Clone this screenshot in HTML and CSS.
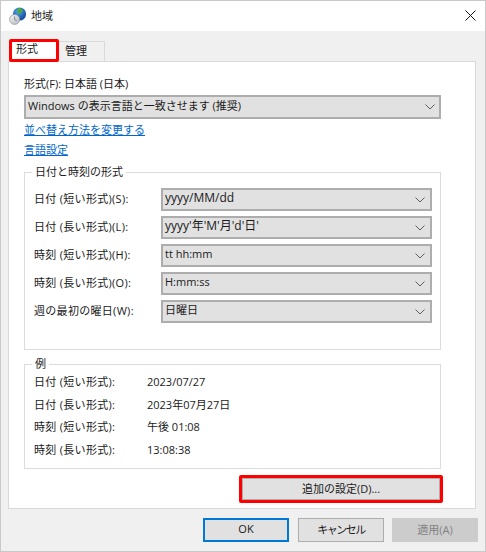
FILE: index.html
```html
<!DOCTYPE html>
<html lang="ja">
<head>
<meta charset="utf-8">
<title>地域</title>
<link rel="stylesheet" href="styles.css">
</head>
<body>
<div class="window">
  <header class="titlebar">
    <svg class="app-icon" width="18" height="18" viewBox="0 0 18 18">
      <defs>
        <radialGradient id="sea" cx="40%" cy="30%" r="80%"><stop offset="0" stop-color="#4fa6ea"/><stop offset="1" stop-color="#0b3a90"/></radialGradient>
        <linearGradient id="clock" x1="0" y1="0" x2="1" y2="1"><stop offset="0" stop-color="#f6f6f6"/><stop offset="1" stop-color="#b4babf"/></linearGradient>
      </defs>
      <circle cx="10.500" cy="7" r="6.600" fill="url(#sea)"/>
      <path d="M8.500 1.800 11 1l2 1 .8 2-1.800 1.400-1 1.800-1.600-.6-1-2.200Z" fill="#4fa83a"/>
      <circle cx="5.600" cy="12.400" r="5" fill="url(#clock)" stroke="#8b9196" stroke-width=".7"/>
      <path d="M5.600 9.400v3.200l2 1" fill="none" stroke="#6d7276" stroke-width=".8"/>
    </svg>
    <span class="title">地域</span>
    <svg class="close" width="11" height="11" viewBox="0 0 11 11"><path d="M.5.5l10 10M10.500.5l-10 10" stroke="#111" fill="none"/></svg>
  </header>
  <div class="body">
    <nav class="tabs">
      <div class="tab tab-active">形式</div>
      <div class="tab">管理</div>
    </nav>
    <main class="panel">
      <div class="format-label">形式(F): 日本語 (日本)</div>
      <div class="select select-main"><span>Windows の表示言語と一致させます (推奨)</span><svg class="chev" width="10" height="6" viewBox="0 0 10 6"><path d="M.5.5 5 5 9.500.5" /></svg></div>
      <a class="link link-first">並べ替え方法を変更する</a>
      <a class="link">言語設定</a>
      <fieldset class="group group-formats">
        <legend>日付と時刻の形式</legend>
        <div class="format-grid">
          <label>日付 (短い形式)(S):</label>
          <div class="select select-wide"><span>yyyy/MM/dd</span><svg class="chev" width="10" height="6" viewBox="0 0 10 6"><path d="M.5.5 5 5 9.500.5" /></svg></div>
          <label>日付 (長い形式)(L):</label>
          <div class="select select-wide"><span>yyyy'年'M'月'd'日'</span><svg class="chev" width="10" height="6" viewBox="0 0 10 6"><path d="M.5.5 5 5 9.500.5" /></svg></div>
          <label>時刻 (短い形式)(H):</label>
          <div class="select"><span>tt hh:mm</span><svg class="chev" width="10" height="6" viewBox="0 0 10 6"><path d="M.5.5 5 5 9.500.5" /></svg></div>
          <label>時刻 (長い形式)(O):</label>
          <div class="select"><span>H:mm:ss</span><svg class="chev" width="10" height="6" viewBox="0 0 10 6"><path d="M.5.5 5 5 9.500.5" /></svg></div>
          <label>週の最初の曜日(W):</label>
          <div class="select"><span>日曜日</span><svg class="chev" width="10" height="6" viewBox="0 0 10 6"><path d="M.5.5 5 5 9.500.5" /></svg></div>
        </div>
      </fieldset>
      <fieldset class="group group-examples">
        <legend>例</legend>
        <dl class="example-grid">
          <dt>日付 (短い形式):</dt><dd>2023/07/27</dd>
          <dt>日付 (長い形式):</dt><dd>2023年07月27日</dd>
          <dt>時刻 (短い形式):</dt><dd>午後 01:08</dd>
          <dt>時刻 (長い形式):</dt><dd>13:08:38</dd>
        </dl>
      </fieldset>
      <div class="more-row">
        <div class="highlight"><button class="btn btn-more">追加の設定(D)...</button></div>
      </div>
    </main>
    <footer class="footer">
      <button class="btn btn-ok">OK</button>
      <button class="btn btn-cancel">キャンセル</button>
      <button class="btn btn-apply">適用(A)</button>
    </footer>
  </div>
</div>
</body>
</html>
```

FILE: styles.css
```css
* { box-sizing: border-box; }
html, body { margin: 0; padding: 0; }
body {
  font-family: "Open Sans", "Noto Sans CJK JP", sans-serif;
  font-size: 11px;
  color: #1a1a1a;
  background: #fff;
}
.window {
  width: 486px;
  height: 552px;
  border: 1px solid #c9c9c9;
  display: flex;
  flex-direction: column;
  overflow: hidden;
}
.titlebar {
  height: 30px;
  flex: none;
  background: #fff;
  display: flex;
  align-items: center;
  padding: 0 9px 0 8px;
}
.app-icon { flex: none; margin-right: 4px; }
.title { flex: 1; padding-bottom: 2px; }
.close { flex: none; margin-top: -1px; }
.body {
  flex: 1;
  background: #f0f0f0;
  padding: 8px 7px 0 7px;
  display: flex;
  flex-direction: column;
}
.tabs {
  display: flex;
  height: 23px;
  margin-bottom: -1px;
  position: relative;
  z-index: 1;
  margin-right: 2px;
  flex: none;
}
.tab {
  width: 46px;
  height: 21px;
  margin-top: 2px;
  border: 1px solid #d9d9d9;
  border-left: 0;
  background: #f0f0f0;
  padding-left: 6px;
  line-height: 18px;
}
.tab-active {
  width: 50px;
  height: 23px;
  margin-top: 0;
  margin-left: 1px;
  border: 3px solid #f00;
  border-radius: 2px;
  background: #fff;
  line-height: 14px;
  padding-left: 4px;
}
.panel {
  height: 448px;
  margin-right: 2px;
  border: 1px solid #d9d9d9;
  background: #fff;
  padding: 14px 34px 0 15px;
  flex: none;
}
.format-label { height: 19px; line-height: 16px; }
.select {
  height: 23px;
  border: 2px solid #adadad;
  background: #e1e1e1;
  display: flex;
  align-items: center;
  justify-content: space-between;
  padding: 0 5px 3px 2px;
  line-height: 18px;
  white-space: nowrap;
}
.select-wide { font-size: 12px; }
.select-main { height: 24px; padding-right: 4px; }
.chev { flex: none; margin-top: 3px; }
.chev path { fill: none; stroke: #5f5f5f; stroke-width: 1; }
.link {
  display: block;
  width: max-content;
  height: 20px;
  line-height: 18px;
  color: #0066cc;
  text-decoration: underline;
}
.link-first { margin-top: 2px; }
.group {
  margin: 0;
  min-width: 0;
  border: 1px solid #dcdcdc;
  padding: 0;
}
.group legend {
  padding: 0 3px;
  margin-left: 7px;
  line-height: 16px;
  height: 16px;
}
.group-formats { margin-top: 3px; height: 186px; }
.format-grid {
  display: grid;
  grid-template-columns: 127px 271px;
  grid-auto-rows: 23px;
  row-gap: 5px;
  margin: 8px 0 0 9px;
  align-items: center;
}
.format-grid label { padding-bottom: 4px; letter-spacing: .3px; }
.group-examples { margin-top: 6px; height: 113px; }
.example-grid {
  display: grid;
  grid-template-columns: 113px 1fr;
  grid-auto-rows: 22.6px;
  margin: -2px 0 0 9px;
  align-items: center;
}
.example-grid dt { margin: 0; letter-spacing: .3px; }
.example-grid dd { margin: 0; }
.more-row { display: flex; justify-content: flex-end; margin: 6px -2px 0 0; }
.highlight {
  width: 204px;
  height: 28px;
  border: 3px solid #f00;
  border-radius: 2px;
  display: flex;
}
.btn {
  font: inherit;
  color: #1a1a1a;
  padding: 0 0 3px;
  margin: 0;
  background: #e1e1e1;
  border: 1px solid #adadad;
}
.btn-more { width: 100%; height: 100%; }
.footer {
  display: flex;
  justify-content: flex-end;
  margin-top: 9px;
  height: 24px;
  flex: none;
}
.footer .btn { width: 86px; height: 24px; }
.btn-ok { border: 2px solid #0078d7; margin-right: 9px; }
.btn-cancel { margin-right: 8px; letter-spacing: -1.500px; }
.footer .btn-apply { background: #ccc; border-color: #ccc; color: #838383; }
```
